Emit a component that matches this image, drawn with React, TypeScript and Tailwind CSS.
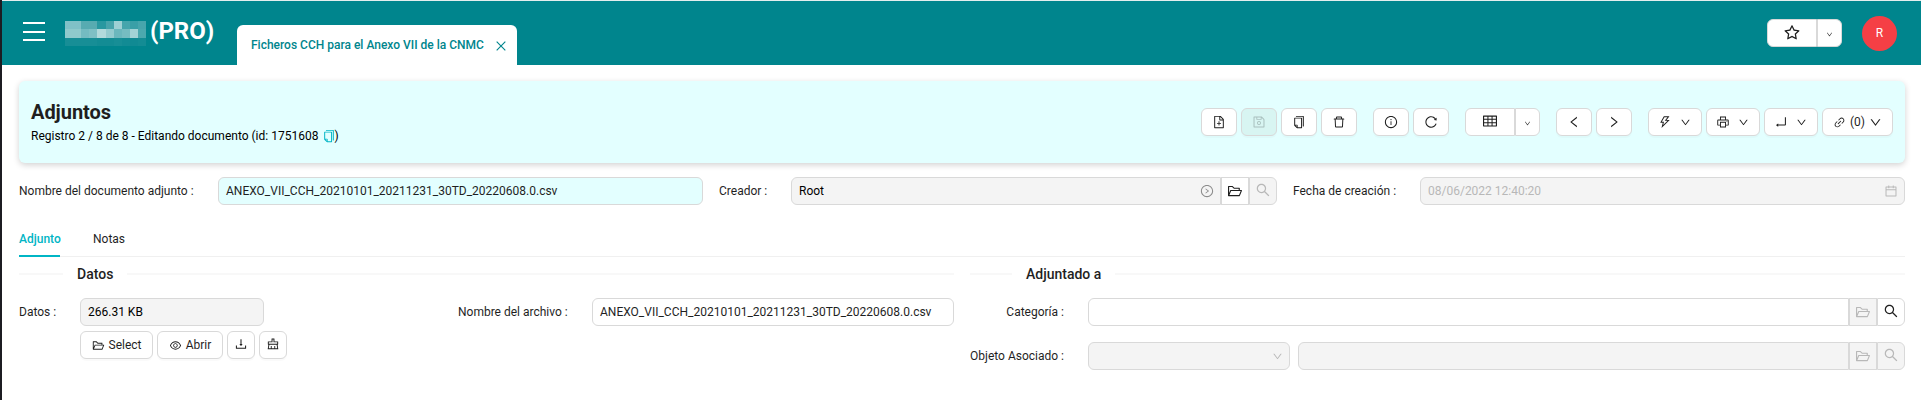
import React from "react";
import {
  AiOutlineCalendar, AiOutlineClear, AiOutlineClose, AiOutlineCopy, AiOutlineDelete, AiOutlineDown,
  AiOutlineDownload, AiOutlineEnter, AiOutlineEye, AiOutlineFileAdd, AiOutlineFolderOpen,
  AiOutlineInfoCircle, AiOutlineLeft, AiOutlineLink, AiOutlinePrinter, AiOutlineReload,
  AiOutlineRight, AiOutlineRightCircle, AiOutlineSave, AiOutlineSearch, AiOutlineStar,
  AiOutlineTable, AiOutlineThunderbolt,
} from "react-icons/ai";

const MOSAIC = [
  ["#80c1c7", "#80c1c7", "#57abb1", "#57abb1", "#2898a0", "#47a4ab", "#9ed0d4", "#45a5ac", "#3a9fa7", "#47a5ac"],
  ["#8fcacc", "#8fcacc", "#74bbc1", "#7ec0c5", "#b2dadc", "#94cbcf", "#6bb7bd", "#76bcc1", "#a3d3d6", "#4ba8ae"],
  ["#178e96", "#178e96", "#178e96", "#178e96", "#138c94", "#138c94", "#178e96", "#128b94", "#108a93", "#138c94"],
];

const BTN = "flex h-7 shrink-0 items-center justify-center rounded-md border border-[#d9d9d9] bg-white shadow-[0_2px_0_rgba(0,0,0,0.02)]";

function Btn({ children, className = "w-9" }: { children: React.ReactNode; className?: string }) {
  return <button className={`${BTN} ${className}`}>{children}</button>;
}

function Split({ children }: { children: React.ReactNode }) {
  return (
    <div className="flex">
      <button className="flex h-7 w-[50px] items-center justify-center rounded-l-md border border-[#d9d9d9] bg-white">{children}</button>
      <button className="flex h-7 w-[25px] items-center justify-center rounded-r-md border border-[#d9d9d9] bg-white pt-[3px]">
        <AiOutlineDown size={7} />
      </button>
    </div>
  );
}

function Title({ children, left }: { children: string; left: string }) {
  return (
    <div className="flex h-6 items-center gap-3.5">
      <div className={`h-0.5 bg-[#f8f8f8] ${left}`} />
      <h2 className="text-sm font-medium">{children}</h2>
      <div className="h-0.5 flex-1 bg-[#f8f8f8]" />
    </div>
  );
}

function Lookup({ text, folder, search, className = "" }: { text?: string; folder: boolean; search: boolean; className?: string }) {
  const on = "bg-white text-[#1f1f1f]";
  const off = "bg-[#f4f4f4] text-[#b8b8b8]";
  return (
    <div className={`flex h-7 ${className}`}>
      <div className={`flex flex-1 items-center justify-between rounded-l-md border border-[#d9d9d9] pl-[7px] pr-1.5 ${folder || !search ? "bg-[#f4f4f4]" : "bg-white"}`}>
        <span className="text-black">{text}</span>
        {text && <AiOutlineRightCircle size={14} className="text-[#8c8c8c]" />}
      </div>
      <button className={`flex w-7 items-center justify-center border border-[#d9d9d9] pb-px ${folder ? on : off}`}>
        <AiOutlineFolderOpen size={16} />
      </button>
      <button className={`flex w-7 items-center justify-center rounded-r-md border border-[#d9d9d9] pb-0.5 ${search ? on : off}`}>
        <AiOutlineSearch size={16} />
      </button>
    </div>
  );
}

export default function App() {
  return (
    <div className="flex h-[400px] w-[1921px] overflow-hidden bg-white font-['Roboto',sans-serif] text-xs leading-5 text-[#1f1f1f]">
      <div className="w-0.5 shrink-0 bg-[#1c1c22]" />
      <div className="min-w-0 flex-1">
        <header className="flex h-[65px] items-start border-t border-[#e4eeee] bg-[#00858d]">
          <div className="ml-[21px] mt-[21px] flex w-[22px] shrink-0 flex-col gap-[6.5px]">
            <div className="h-0.5 bg-white" />
            <div className="h-0.5 bg-white" />
            <div className="h-0.5 bg-white" />
          </div>
          <div className="ml-5 mt-5 grid w-[81px] shrink-0 grid-cols-10">
            {MOSAIC.flat().map((c, i) => <div key={i} className="h-[8.34px]" style={{ backgroundColor: c }} />)}
          </div>
          <div className="ml-1 mt-3.5 w-[87px] shrink-0 text-2xl font-bold text-white">(PRO)</div>
          <div className="mt-6 flex h-10 w-[280px] shrink-0 items-center justify-between whitespace-nowrap rounded-t-md bg-white pl-3.5 pr-[9px] text-[#00858d]">
            <span className="font-medium">Ficheros CCH para el Anexo VII de la CNMC</span>
            <AiOutlineClose size={14} className="mt-0.5" />
          </div>
          <div className="ml-auto mr-6 mt-[15px] flex items-start gap-5">
            <div className="mt-[3px]"><Split><AiOutlineStar size={18} /></Split></div>
            <div className="flex size-[35px] items-center justify-center rounded-full bg-[#f53f45] pb-0.5 text-white">R</div>
          </div>
        </header>

        <main className="pl-[17px] pr-4 pt-4">
          <section className="flex h-[82px] items-center justify-between rounded-md bg-[#e3ffff] pl-3 pr-3 shadow-[0_2px_6px_rgba(0,0,0,0.18)]">
            <div className="pt-[3px]">
              <h1 className="text-xl font-bold leading-6 tracking-[-0.05px]">Adjuntos</h1>
              <p className="flex items-center leading-6 text-black">
                Registro 2 / 8 de 8 - Editando documento (id: 1751608
                <AiOutlineCopy size={14} className="-mr-0.5 ml-1 text-[#00b5c5]" />)
              </p>
            </div>
            <div className="flex gap-4">
              <div className="flex gap-1">
                <Btn><AiOutlineFileAdd size={14} /></Btn>
                <Btn className="w-9 !bg-[#d8f5f2] text-[#a9c0be]"><AiOutlineSave size={14} /></Btn>
                <Btn><AiOutlineCopy size={14} /></Btn>
                <Btn><AiOutlineDelete size={14} /></Btn>
              </div>
              <div className="flex gap-1">
                <Btn><AiOutlineInfoCircle size={14} /></Btn>
                <Btn><AiOutlineReload size={14} /></Btn>
              </div>
              <Split><AiOutlineTable size={16} className="mb-0.5" /></Split>
              <div className="flex gap-1">
                <Btn><AiOutlineLeft size={14} /></Btn>
                <Btn><AiOutlineRight size={14} /></Btn>
              </div>
              <div className="flex gap-1">
                <Btn className="w-[54px] gap-2 pr-px"><AiOutlineThunderbolt size={14} /><AiOutlineDown size={11} /></Btn>
                <Btn className="w-[54px] gap-2 pr-px"><AiOutlinePrinter size={14} /><AiOutlineDown size={11} /></Btn>
                <Btn className="w-[54px] gap-2 pr-px"><AiOutlineEnter size={14} /><AiOutlineDown size={11} /></Btn>
                <Btn className="w-[71px] gap-1"><AiOutlineLink size={13} /><span>(0)</span><AiOutlineDown size={13} /></Btn>
              </div>
            </div>
          </section>

          <div className="mt-3.5 flex h-7 items-center">
            <label className="w-[199px]">Nombre del documento adjunto :</label>
            <div className="flex h-7 w-[485px] items-center rounded-md border border-[#d9d9d9] bg-[#e3ffff] px-[7px]">ANEXO_VII_CCH_20210101_20211231_30TD_20220608.0.csv</div>
            <label className="ml-4 w-[72px]">Creador :</label>
            <Lookup text="Root" folder search={false} className="w-[486px]" />
            <label className="ml-4 w-[127px]">Fecha de creación :</label>
            <div className="flex h-7 flex-1 items-center justify-between rounded-md border border-[#d9d9d9] bg-[#f4f4f4] pl-[7px] pr-1.5 text-[#b8b8b8]">
              08/06/2022 12:40:20
              <AiOutlineCalendar size={14} />
            </div>
          </div>

          <nav className="mt-5 flex h-8 gap-8 border-b border-[#f0f0f0]">
            <div className="h-8 w-[41px] border-b-2 border-[#00b5c5] pt-1 font-medium text-[#00b5c5]">Adjunto</div>
            <div className="pl-px pt-1">Notas</div>
          </nav>

          <div className="mt-[5px] flex gap-4">
            <div className="w-[935px]">
              <Title left="w-[44px]">Datos</Title>
              <div className="mt-3 flex h-7 items-center">
                <label className="w-[61px] shrink-0">Datos :</label>
                <div className="flex h-7 w-[184px] shrink-0 items-center rounded-md border border-[#d9d9d9] bg-[#f4f4f4] px-[7px] text-black">266.31 KB</div>
                <label className="ml-[194px] w-[134px] shrink-0">Nombre del archivo :</label>
                <div className="flex h-7 flex-1 items-center rounded-md border border-[#d9d9d9] bg-white px-[7px]">ANEXO_VII_CCH_20210101_20211231_30TD_20220608.0.csv</div>
              </div>
              <div className="ml-[61px] mt-[5px] flex gap-1">
                <Btn className="w-[73px] gap-1"><AiOutlineFolderOpen size={13} />Select</Btn>
                <Btn className="w-[66px] gap-1"><AiOutlineEye size={13} />Abrir</Btn>
                <Btn className="w-7 pb-0.5"><AiOutlineDownload size={14} /></Btn>
                <Btn className="w-7 pb-0.5"><AiOutlineClear size={14} /></Btn>
              </div>
            </div>
            <div className="flex-1">
              <Title left="w-[42px]">Adjuntado a</Title>
              <div className="mt-3 flex items-center">
                <label className="mr-6 w-[94px] text-right">Categoría :</label>
                <Lookup folder={false} search className="flex-1" />
              </div>
              <div className="mt-4 flex items-center">
                <label className="mr-6 w-[94px] whitespace-nowrap text-right">Objeto Asociado :</label>
                <div className="mr-2 flex h-7 w-[202px] items-center justify-end rounded-md border border-[#d9d9d9] bg-[#f4f4f4] px-1.5 text-[#b8b8b8]">
                  <AiOutlineDown size={11} />
                </div>
                <Lookup folder={false} search={false} className="flex-1" />
              </div>
            </div>
          </div>
        </main>
      </div>
    </div>
  );
}
